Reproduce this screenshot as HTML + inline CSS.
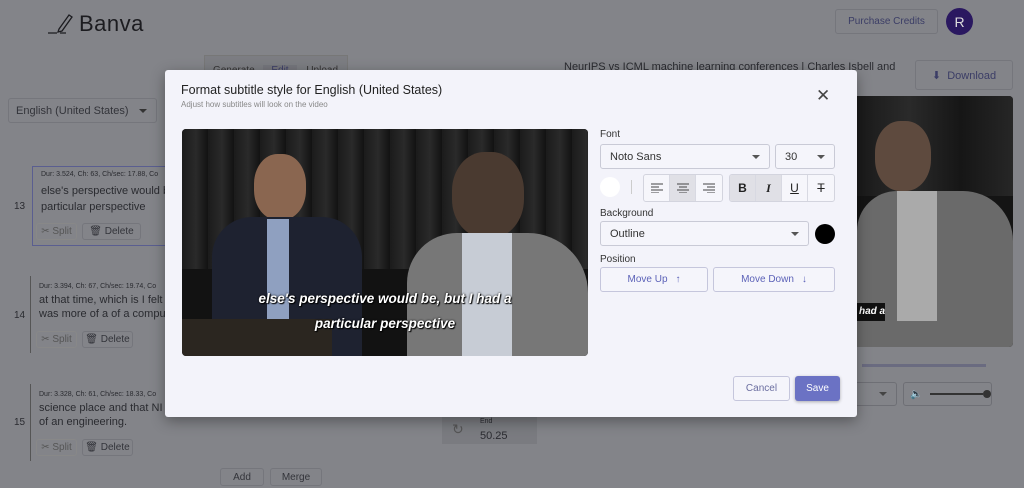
<!DOCTYPE html>
<html><head><meta charset="utf-8"><style>
*{box-sizing:border-box;margin:0;padding:0}
body{width:1024px;height:488px;overflow:hidden;background:#838489;font-family:"Liberation Sans",sans-serif;position:relative;color:#222}
.a{position:absolute}
.dim{color:#2a2b30}
.btn{position:absolute;border:1px solid #75767c;border-radius:3px;font-size:10px;color:#33343a;display:flex;align-items:center;justify-content:center}
.modal{position:absolute;left:165px;top:70px;width:692px;height:347px;background:#f3f3fa;border-radius:3px;box-shadow:0 4px 14px rgba(0,0,0,.35)}
.inp{position:absolute;border:1px solid #c9cad6;border-radius:3px;background:#f5f5fb;font-size:11px;color:#333;display:flex;align-items:center;padding-left:9px}
.car{position:absolute;right:9px;top:50%;margin-top:-2px;width:0;height:0;border-left:4px solid transparent;border-right:4px solid transparent;border-top:4px solid #555}
.grp{position:absolute;display:flex;border:1px solid #d3d4de;border-radius:3px;overflow:hidden;background:#f6f6fb}
.grp div{width:26px;height:26px;display:flex;align-items:center;justify-content:center;border-right:1px solid #d8d9e2;font-size:12px}
.grp div:last-child{border-right:none}
.on{background:#e0e0e6}
.lbl{position:absolute;font-size:10px;color:#333}
.pb{position:absolute;border:1px solid #c5c6dc;border-radius:3px;font-size:10px;color:#5c62b8;display:flex;align-items:center;justify-content:center;gap:8px;background:#f5f5fb}
</style></head><body>
<div class="a" style="left:47px;top:9px;font-size:22px;color:#1c1c20;letter-spacing:.5px">
<svg width="28" height="26" style="vertical-align:-4px;margin-right:4px" viewBox="0 0 28 26"><path d="M1 24h9M13 24h6M12 20l10-14 3 2-10 14-4 1z" fill="none" stroke="#1c1c20" stroke-width="1.3"/></svg>Banva</div>
<div class="btn" style="left:835px;top:9px;width:103px;height:25px;color:#3b3d66">Purchase Credits</div>
<div class="a" style="left:946px;top:8px;width:27px;height:27px;border-radius:50%;background:#2a1860;color:#ddd;font-size:14px;display:flex;align-items:center;justify-content:center">R</div>
<div class="a" style="left:204px;top:55px;width:144px;height:18px;border:1px solid #777;border-bottom:none;background:#7c7d82;font-size:10px;color:#333;display:flex;padding-top:9px;overflow:hidden">
<span style="width:58px;text-align:center">Generate</span><span style="width:35px;text-align:center;background:#75767c;color:#3b3d66">Edit</span><span style="width:50px;text-align:center">Upload</span></div>
<div class="a" style="left:564px;top:61px;font-size:11px;color:#2a2b30">NeurIPS vs ICML machine learning conferences | Charles Isbell and</div>
<div class="btn" style="left:915px;top:60px;width:98px;height:30px;font-size:11px;color:#3b3d66">⬇&nbsp; Download</div>
<div class="btn" style="left:8px;top:98px;width:149px;height:25px;font-size:11px;justify-content:flex-start;padding-left:7px">English (United States)<span class="car" style="border-top-color:#333"></span></div>
<div class="a" style="left:32px;top:166px;width:140px;height:80px;border:1px solid #5a5e90;border-right:none"></div>
<div class="a dim" style="left:41px;top:171px;font-size:7px">Dur: 3.524, Ch: 63, Ch/sec: 17.88, Co</div>
<div class="a dim" style="left:41px;top:183px;font-size:11px;line-height:16px">else's perspective would b<br>particular perspective</div>
<div class="a dim" style="left:14px;top:201px;font-size:10px">13</div>
<div class="btn" style="left:36px;top:223px;width:41px;height:17px;border-color:#888;color:#555">✂ Split</div>
<div class="btn" style="left:82px;top:223px;width:59px;height:17px">🗑 Delete</div>
<div class="a" style="left:30px;top:276px;width:1px;height:77px;background:#555"></div>
<div class="a dim" style="left:39px;top:283px;font-size:7px">Dur: 3.394, Ch: 67, Ch/sec: 19.74, Co</div>
<div class="a dim" style="left:39px;top:293px;font-size:11px;line-height:14px">at that time, which is I felt<br>was more of a of a compu</div>
<div class="a dim" style="left:14px;top:310px;font-size:10px">14</div>
<div class="btn" style="left:36px;top:331px;width:41px;height:17px;border-color:#888;color:#555">✂ Split</div>
<div class="btn" style="left:82px;top:331px;width:51px;height:17px">🗑 Delete</div>
<div class="a" style="left:30px;top:384px;width:1px;height:77px;background:#555"></div>
<div class="a dim" style="left:39px;top:391px;font-size:7px">Dur: 3.328, Ch: 61, Ch/sec: 18.33, Co</div>
<div class="a dim" style="left:39px;top:401px;font-size:11px;line-height:14px">science place and that NI<br>of an engineering.</div>
<div class="a dim" style="left:14px;top:417px;font-size:10px">15</div>
<div class="btn" style="left:36px;top:439px;width:41px;height:17px;border-color:#888;color:#555">✂ Split</div>
<div class="btn" style="left:82px;top:439px;width:51px;height:17px">🗑 Delete</div>
<div class="a" style="left:442px;top:417px;width:95px;height:27px;background:#7a7b80"></div>
<div class="a dim" style="left:480px;top:418px;font-size:7px">End</div>
<div class="a dim" style="left:480px;top:430px;font-size:11px">50.25</div>
<div class="a" style="left:452px;top:421px;font-size:14px;color:#555">↻</div>
<div class="btn" style="left:220px;top:468px;width:44px;height:18px">Add</div>
<div class="btn" style="left:270px;top:468px;width:52px;height:18px">Merge</div>
<div class="a" style="left:857px;top:96px;width:156px;height:251px;background:#141414;overflow:hidden;border-radius:0 4px 4px 0">
<div class="a" style="left:0;top:0;width:156px;height:100px;background:linear-gradient(90deg,#1a1a1a,#2a2a2a,#161616,#262626)"></div>
<div class="a" style="left:18px;top:25px;width:56px;height:70px;border-radius:45%;background:#5e4a3e"></div>
<div class="a" style="left:0;top:95px;width:156px;height:160px;background:#6a6a6a;border-radius:40px 50px 0 0"></div>
<div class="a" style="left:40px;top:95px;width:40px;height:130px;background:#aaa"></div>
<div class="a" style="left:0;top:207px;width:28px;height:18px;background:#111;color:#fff;font-size:10px;font-style:italic;font-weight:bold;padding-left:2px;white-space:nowrap;overflow:hidden;line-height:18px">had a</div>
</div>
<div class="a" style="left:862px;top:364px;width:124px;height:3px;background:#6a6b80"></div>
<div class="btn" style="left:850px;top:382px;width:47px;height:24px;border-color:#6e6f75"><span class="car" style="border-top-color:#444"></span></div>
<div class="btn" style="left:903px;top:382px;width:89px;height:24px;border-color:#6e6f75;justify-content:flex-start;padding-left:6px">🔈<span style="display:inline-block;width:54px;height:2px;background:#333;margin-left:8px"></span><span style="width:8px;height:8px;border-radius:50%;background:#333;display:inline-block"></span></div>
<div class="modal">
<div class="a" style="left:16px;top:13px;font-size:12.5px;color:#222">Format subtitle style for English (United States)</div>
<div class="a" style="left:16px;top:30px;font-size:8px;color:#888">Adjust how subtitles will look on the video</div>
<div class="a" style="left:651px;top:17px;font-size:17px;color:#444;line-height:1">✕</div>
<div class="a" style="left:17px;top:59px;width:406px;height:227px;border-radius:4px;overflow:hidden;background:#121212">
<div class="a" style="left:0;top:0;width:406px;height:140px;background:repeating-linear-gradient(90deg,#1b1b1b 0,#2a2a2a 14px,#121212 26px)"></div>
<div class="a" style="left:72px;top:25px;width:52px;height:66px;border-radius:45%;background:#8a6650"></div>
<div class="a" style="left:30px;top:88px;width:150px;height:140px;background:#1e2230;border-radius:40px 40px 0 0"></div>
<div class="a" style="left:85px;top:90px;width:22px;height:110px;background:#8fa0c0"></div>
<div class="a" style="left:270px;top:23px;width:72px;height:86px;border-radius:45%;background:#4a3a30"></div>
<div class="a" style="left:225px;top:104px;width:181px;height:124px;background:#777;border-radius:50px 60px 0 0"></div>
<div class="a" style="left:280px;top:104px;width:50px;height:124px;background:#c7ccd5"></div>
<div class="a" style="left:0;top:190px;width:150px;height:37px;background:#2b2620"></div>
<div class="a" style="left:0;top:157px;width:406px;text-align:center;color:#fff;font-weight:bold;font-style:italic;font-size:13.5px;line-height:25px;text-shadow:0 0 2px #000,1px 1px 1px #000">else's perspective would be, but I had a<br>particular perspective</div>
</div>
<div class="lbl" style="left:435px;top:59px">Font</div>
<div class="inp" style="left:435px;top:74px;width:170px;height:25px">Noto Sans<span class="car"></span></div>
<div class="inp" style="left:610px;top:74px;width:60px;height:25px">30<span class="car"></span></div>
<div class="a" style="left:435px;top:107px;width:20px;height:20px;border-radius:50%;background:#fff"></div>
<div class="a" style="left:466px;top:110px;width:1px;height:14px;background:#ccc"></div>
<div class="grp" style="left:478px;top:104px">
<div><svg width="12" height="10"><path d="M0 1h12M0 4h8M0 7h12M0 10h8" stroke="#444"/></svg></div>
<div class="on"><svg width="12" height="10"><path d="M0 1h12M2 4h8M0 7h12M2 10h8" stroke="#444"/></svg></div>
<div><svg width="12" height="10"><path d="M0 1h12M4 4h8M0 7h12M4 10h8" stroke="#444"/></svg></div>
</div>
<div class="grp" style="left:564px;top:104px;background:#f6f6fb">
<div class="on" style="font-weight:bold">B</div>
<div class="on" style="font-style:italic;font-family:'Liberation Serif',serif;font-weight:bold">I</div>
<div style="text-decoration:underline">U</div>
<div style="text-decoration:line-through">T</div>
</div>
<div class="lbl" style="left:435px;top:138px">Background</div>
<div class="inp" style="left:435px;top:151px;width:209px;height:25px">Outline<span class="car"></span></div>
<div class="a" style="left:650px;top:154px;width:20px;height:20px;border-radius:50%;background:#000"></div>
<div class="lbl" style="left:435px;top:184px">Position</div>
<div class="pb" style="left:435px;top:197px;width:108px;height:25px">Move Up <span>↑</span></div>
<div class="pb" style="left:548px;top:197px;width:122px;height:25px">Move Down <span>↓</span></div>
<div class="pb" style="left:568px;top:306px;width:57px;height:25px;color:#6b6ea0">Cancel</div>
<div class="a" style="left:630px;top:306px;width:45px;height:25px;background:#6b72c4;border-radius:3px;color:#fff;font-size:10px;display:flex;align-items:center;justify-content:center;box-shadow:0 1px 3px rgba(0,0,0,.3)">Save</div>
</div>
</body></html>
